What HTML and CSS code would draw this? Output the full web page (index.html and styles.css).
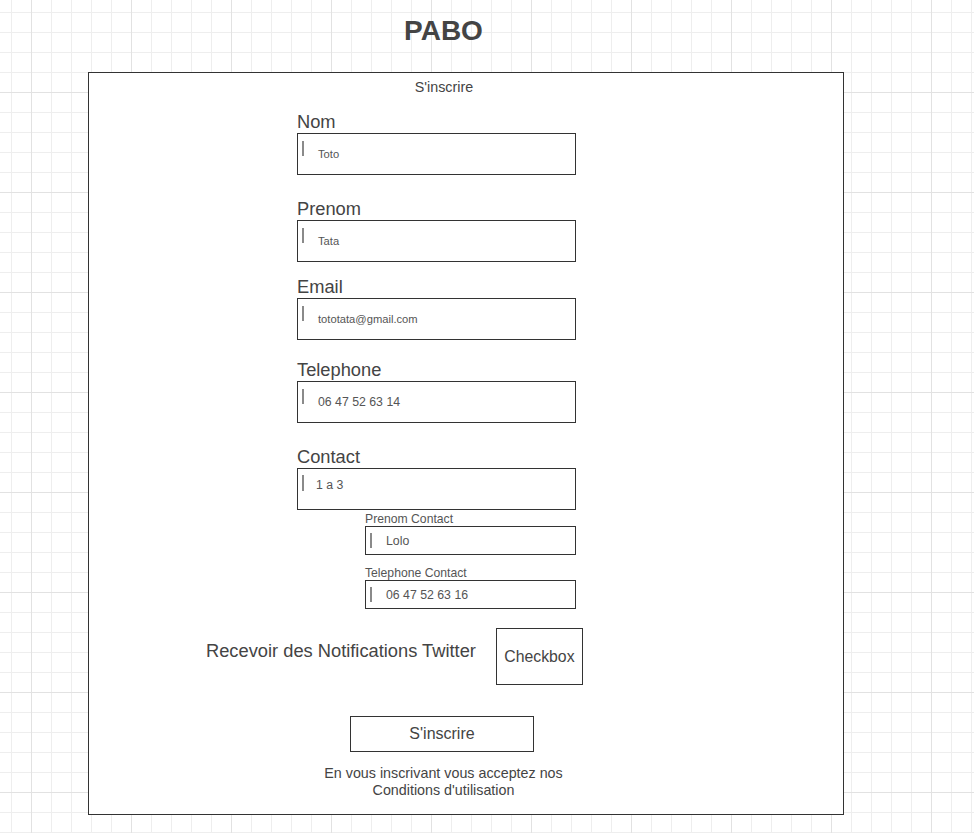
FILE: index.html
```html
<!DOCTYPE html>
<html lang="fr">
<head>
<meta charset="utf-8">
<title>PABO - S'inscrire</title>
<link rel="stylesheet" href="styles.css">
</head>
<body>
<header class="top">
  <h1 class="brand">PABO</h1>
</header>
<main class="panel">
  <p class="panel-title">S'inscrire</p>

  <div class="field f-nom">
    <div class="field-label">Nom</div>
    <div class="input"><span class="caret"></span><span class="value">Toto</span></div>
  </div>

  <div class="field f-prenom">
    <div class="field-label">Prenom</div>
    <div class="input"><span class="caret"></span><span class="value">Tata</span></div>
  </div>

  <div class="field f-email">
    <div class="field-label">Email</div>
    <div class="input"><span class="caret"></span><span class="value">tototata@gmail.com</span></div>
  </div>

  <div class="field f-tel">
    <div class="field-label">Telephone</div>
    <div class="input"><span class="caret"></span><span class="value value-lg">06 47 52 63 14</span></div>
  </div>

  <div class="field f-contact">
    <div class="field-label">Contact</div>
    <div class="input input-top"><span class="caret caret-contact"></span><span class="value value-lg value-top">1 a 3</span></div>
  </div>

  <div class="subfield s-prenom">
    <div class="sub-label">Prenom Contact</div>
    <div class="sub-input"><span class="caret caret-sub"></span><span class="value value-lg">Lolo</span></div>
  </div>

  <div class="subfield s-tel">
    <div class="sub-label">Telephone Contact</div>
    <div class="sub-input"><span class="caret caret-sub"></span><span class="value value-lg">06 47 52 63 16</span></div>
  </div>

  <div class="check-row">
    <span class="check-text">Recevoir des Notifications Twitter</span>
    <div class="checkbox">Checkbox</div>
  </div>

  <div class="button">S'inscrire</div>

  <p class="terms">En vous inscrivant vous acceptez nos<br>Conditions d'utilisation</p>
</main>
</body>
</html>
```

FILE: styles.css
```css
html, body {
  margin: 0;
  padding: 0;
}

body {
  min-height: 833px;
  font-family: "Liberation Sans", Arial, sans-serif;
  color: #444;
  background-color: #fff;
  background-image:
    linear-gradient(to right, #e2e2e2 1px, transparent 1px),
    linear-gradient(to bottom, #e2e2e2 1px, transparent 1px),
    linear-gradient(to right, #eeeeee 1px, transparent 1px),
    linear-gradient(to bottom, #eeeeee 1px, transparent 1px);
  background-size: 100px 100px, 100px 100px, 20px 20px, 20px 20px;
  background-position: 31px 0, 0 92px, 11px 0, 0 12px;
}

.top {
  height: 72px;
  box-sizing: border-box;
  padding-top: 15px;
  width: 887px;
  text-align: center;
}

.brand {
  margin: 0;
  font-size: 28px;
  line-height: 32px;
  font-weight: bold;
  color: #444;
}

.panel {
  display: block;
  margin-left: 88px;
  width: 756px;
  height: 743px;
  box-sizing: border-box;
  border: 1px solid #333;
  background: #fff;
}

.panel-title {
  margin: 6px 0 0 0;
  width: 710px;
  text-align: center;
  font-size: 14.3px;
  line-height: 16px;
  color: #444;
}

.field {
  margin-left: 208px;
  width: 279px;
}

.f-nom { margin-top: 16px; }
.f-prenom { margin-top: 23px; }
.f-email { margin-top: 14px; }
.f-tel { margin-top: 19px; }
.f-contact { margin-top: 23px; }

.field-label {
  font-size: 18.3px;
  line-height: 22px;
  color: #444;
}

.input {
  height: 42px;
  box-sizing: border-box;
  border: 1px solid #333;
  display: flex;
  align-items: center;
  padding-left: 4px;
}

.input-top {
  align-items: flex-start;
}

.caret {
  flex: none;
  width: 2px;
  height: 15px;
  background: #8a8a8a;
  align-self: flex-start;
  margin-top: 7px;
}

.caret-contact {
  margin-top: 6px;
  height: 16px;
}

.caret-sub {
  margin-top: 6px;
  height: 15px;
}

.value {
  margin-left: 14px;
  font-size: 11.2px;
  line-height: 13px;
  color: #555;
  white-space: nowrap;
}

.value-lg {
  font-size: 12.3px;
  line-height: 14px;
}

.value-top {
  margin-left: 12px;
  margin-top: 9px;
}

.subfield {
  margin-left: 276px;
  width: 211px;
}

.s-prenom { margin-top: 2px; }
.s-tel { margin-top: 11px; }

.sub-label {
  font-size: 12.2px;
  line-height: 14px;
  color: #555;
}

.sub-input {
  height: 29px;
  box-sizing: border-box;
  border: 1px solid #333;
  display: flex;
  align-items: center;
  padding-left: 4px;
}

.check-row {
  margin-top: 19px;
  margin-left: 117px;
  display: flex;
  align-items: flex-start;
  gap: 20px;
}

.check-text {
  margin-top: 12px;
  font-size: 18.3px;
  line-height: 22px;
  color: #444;
  white-space: nowrap;
}

.checkbox {
  width: 87px;
  height: 57px;
  box-sizing: border-box;
  border: 1px solid #333;
  display: flex;
  align-items: center;
  justify-content: center;
  font-size: 15.8px;
  color: #444;
}

.button {
  margin-top: 31px;
  margin-left: 261px;
  width: 184px;
  height: 36px;
  box-sizing: border-box;
  border: 1px solid #333;
  display: flex;
  align-items: center;
  justify-content: center;
  font-size: 16px;
  color: #444;
}

.terms {
  margin: 13px 0 0 0;
  width: 709px;
  text-align: center;
  font-size: 14.3px;
  line-height: 17px;
  color: #444;
}
```
